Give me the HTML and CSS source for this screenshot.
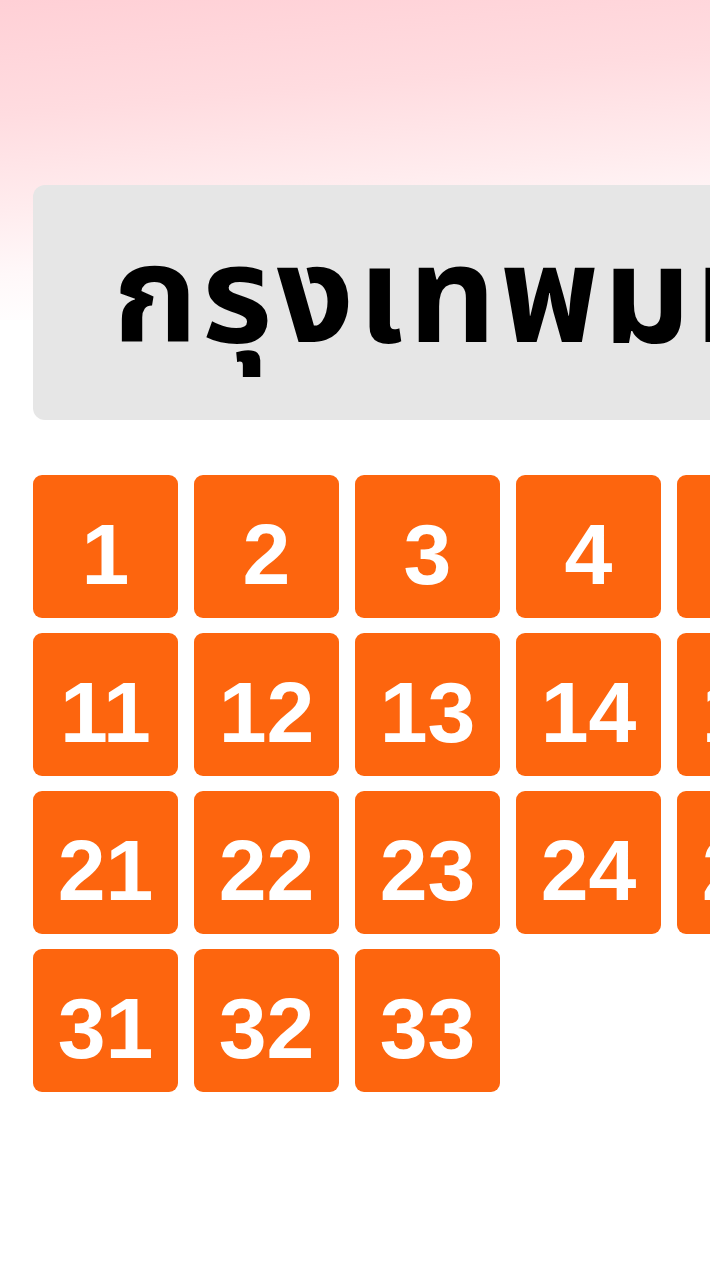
FILE: index.html
```html
<!DOCTYPE html>
<html lang="th">
<head>
    <meta charset="UTF-8">
    <meta name="viewport" content="width=device-width, initial-scale=1.0">
    <title>กรุงเทพมหานคร</title>
    <link rel="stylesheet" href="styles.css">
</head>
<body>
    <div class="page">
        <div class="title-box">
            <h1 class="title">กรุงเทพมหานคร</h1>
        </div>

        <div class="grid" id="grid">
            <!-- tiles are filled in below -->
        </div>
    </div>

    <script>
        const grid = document.getElementById("grid");
        for (let i = 1; i <= 33; i++) {
            const tile = document.createElement("div");
            tile.className = "tile";
            tile.textContent = i;
            grid.appendChild(tile);
        }
    </script>
</body>
</html>
```

FILE: styles.css
```css
html {
    overflow-x: hidden;
}
body {
    margin: 0;
    background: #ffffff linear-gradient(175deg, #ffd0d6 0%, #ffdce0 30%, #ffecee 55%, #fff8f9 72%, #ffffff 88%) no-repeat;
    background-size: 100% 320px;
    font-family: "Liberation Sans", Arial, sans-serif;
}
.page {
    padding: 185px 0 0 33px;
    width: max-content;
}
.title-box {
    background: #e6e6e6;
    border-radius: 12px;
    height: 235px;
    width: 1560px;
    display: flex;
    align-items: center;
    padding-left: 80px;
    padding-bottom: 4px;
    box-sizing: border-box;
}
.title {
    margin: 0;
    font-family: "Noto Sans Thai", "Noto Sans", "Liberation Sans", sans-serif;
    font-size: 136px;
    font-weight: 700;
    letter-spacing: 4px;
    color: #000000;
    white-space: nowrap;
}
.grid {
    display: grid;
    grid-template-columns: repeat(10, 145px);
    grid-auto-rows: 143px;
    column-gap: 16px;
    row-gap: 15px;
    margin-top: 55px;
}
.tile {
    background: #fd650e;
    border-radius: 9px;
    color: #ffffff;
    font-size: 86px;
    font-weight: 700;
    display: flex;
    align-items: center;
    justify-content: center;
    padding-top: 16px;
    box-sizing: border-box;
}
```
